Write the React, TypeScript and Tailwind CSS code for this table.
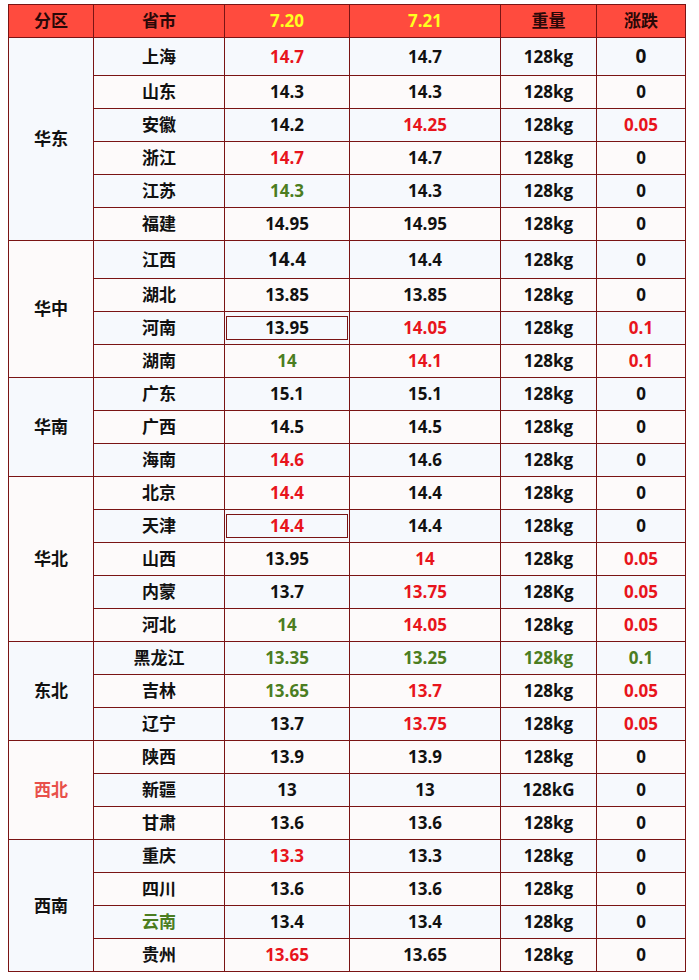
import React from 'react'

type Tone = 'black' | 'red' | 'green'

type Cell = { v: string; t?: Tone; box?: boolean; big?: boolean }

type Row = {
  name: string
  nameTone?: Tone
  d1: Cell
  d2: Cell
  w: Cell
  chg: Cell
  tall?: boolean
}

type Zone = { zone: string; zoneTone?: Tone; rows: Row[] }

const c = (v: string, t: Tone = 'black', extra: Partial<Cell> = {}): Cell => ({ v, t, ...extra })
const kg = c('128kg')

const data: Zone[] = [
  {
    zone: '华东',
    rows: [
      { name: '上海', d1: c('14.7', 'red'), d2: c('14.7'), w: kg, chg: c('0', 'black', { big: true }), tall: true },
      { name: '山东', d1: c('14.3'), d2: c('14.3'), w: kg, chg: c('0') },
      { name: '安徽', d1: c('14.2'), d2: c('14.25', 'red'), w: kg, chg: c('0.05', 'red') },
      { name: '浙江', d1: c('14.7', 'red'), d2: c('14.7'), w: kg, chg: c('0') },
      { name: '江苏', d1: c('14.3', 'green'), d2: c('14.3'), w: kg, chg: c('0') },
      { name: '福建', d1: c('14.95'), d2: c('14.95'), w: kg, chg: c('0') },
    ],
  },
  {
    zone: '华中',
    rows: [
      { name: '江西', d1: c('14.4', 'black', { big: true }), d2: c('14.4'), w: kg, chg: c('0'), tall: true },
      { name: '湖北', d1: c('13.85'), d2: c('13.85'), w: kg, chg: c('0') },
      { name: '河南', d1: c('13.95', 'black', { box: true }), d2: c('14.05', 'red'), w: kg, chg: c('0.1', 'red') },
      { name: '湖南', d1: c('14', 'green'), d2: c('14.1', 'red'), w: kg, chg: c('0.1', 'red') },
    ],
  },
  {
    zone: '华南',
    rows: [
      { name: '广东', d1: c('15.1'), d2: c('15.1'), w: kg, chg: c('0') },
      { name: '广西', d1: c('14.5'), d2: c('14.5'), w: kg, chg: c('0') },
      { name: '海南', d1: c('14.6', 'red'), d2: c('14.6'), w: kg, chg: c('0') },
    ],
  },
  {
    zone: '华北',
    rows: [
      { name: '北京', d1: c('14.4', 'red'), d2: c('14.4'), w: kg, chg: c('0') },
      { name: '天津', d1: c('14.4', 'red', { box: true }), d2: c('14.4'), w: kg, chg: c('0') },
      { name: '山西', d1: c('13.95'), d2: c('14', 'red'), w: kg, chg: c('0.05', 'red') },
      { name: '内蒙', d1: c('13.7'), d2: c('13.75', 'red'), w: c('128Kg'), chg: c('0.05', 'red') },
      { name: '河北', d1: c('14', 'green'), d2: c('14.05', 'red'), w: kg, chg: c('0.05', 'red') },
    ],
  },
  {
    zone: '东北',
    rows: [
      { name: '黑龙江', d1: c('13.35', 'green'), d2: c('13.25', 'green'), w: c('128kg', 'green'), chg: c('0.1', 'green') },
      { name: '吉林', d1: c('13.65', 'green'), d2: c('13.7', 'red'), w: kg, chg: c('0.05', 'red') },
      { name: '辽宁', d1: c('13.7'), d2: c('13.75', 'red'), w: kg, chg: c('0.05', 'red') },
    ],
  },
  {
    zone: '西北',
    zoneTone: 'red',
    rows: [
      { name: '陕西', d1: c('13.9'), d2: c('13.9'), w: kg, chg: c('0') },
      { name: '新疆', d1: c('13'), d2: c('13'), w: c('128kG'), chg: c('0') },
      { name: '甘肃', d1: c('13.6'), d2: c('13.6'), w: kg, chg: c('0') },
    ],
  },
  {
    zone: '西南',
    rows: [
      { name: '重庆', d1: c('13.3', 'red'), d2: c('13.3'), w: kg, chg: c('0') },
      { name: '四川', d1: c('13.6'), d2: c('13.6'), w: kg, chg: c('0') },
      { name: '云南', nameTone: 'green', d1: c('13.4'), d2: c('13.4'), w: kg, chg: c('0') },
      { name: '贵州', d1: c('13.65', 'red'), d2: c('13.65'), w: kg, chg: c('0') },
    ],
  },
]

const toneClass: Record<Tone, string> = {
  black: 'text-[#111111]',
  red: 'text-[#e8141c]',
  green: 'text-[#4b7d21]',
}

const td = 'border border-[#7a1414] text-center align-middle p-0'

function NumCell({ cell }: { cell: Cell }) {
  const cls = `${toneClass[cell.t ?? 'black']} ${cell.big ? 'text-[19px]' : 'text-[17px]'} font-bold`
  if (cell.box) {
    return (
      <td className={td}>
        <div className="mx-[1px] border border-[#7a1414] leading-[21px]">
          <span className={cls}>{cell.v}</span>
        </div>
      </td>
    )
  }
  return (
    <td className={td}>
      <span className={cls}>{cell.v}</span>
    </td>
  )
}

export default function App() {
  let idx = 0
  return (
    <div
      className="min-h-screen bg-white pt-[4px] pl-[8px]"
      style={{ fontFamily: '"Open Sans", "Noto Sans CJK SC", sans-serif' }}
    >
      <table className="table-fixed border-collapse w-[677px]">
        <colgroup>
          <col className="w-[85px]" />
          <col className="w-[131px]" />
          <col className="w-[125px]" />
          <col className="w-[151px]" />
          <col className="w-[96px]" />
          <col className="w-[89px]" />
        </colgroup>
        <thead>
          <tr className="h-[33px] bg-[#ff4b3e]">
            <th className={`${td} text-[17px] font-bold text-[#2a0808]`}>分区</th>
            <th className={`${td} text-[17px] font-bold text-[#2a0808]`}>省市</th>
            <th className={`${td} text-[17px] font-bold text-[#ffff1e]`}>7.20</th>
            <th className={`${td} text-[17px] font-bold text-[#ffff1e]`}>7.21</th>
            <th className={`${td} text-[17px] font-bold text-[#2a0808]`}>重量</th>
            <th className={`${td} text-[17px] font-bold text-[#2a0808]`}>涨跌</th>
          </tr>
        </thead>
        <tbody>
          {data.map((z, zi) =>
            z.rows.map((r, ri) => {
              const rowBg = idx % 2 === 0 ? 'bg-[#f6f9fd]' : 'bg-[#fdfafa]'
              idx++
              return (
                <tr key={r.name} className={`${rowBg} ${r.tall ? 'h-[38px]' : 'h-[33px]'}`}>
                  {ri === 0 && (
                    <td
                      rowSpan={z.rows.length}
                      className={`${td} ${zi % 2 === 0 ? 'bg-[#f6f9fd]' : 'bg-[#fdfafa]'} text-[17px] font-bold ${
                        z.zoneTone === 'red' ? 'text-[#e8504a]' : 'text-[#111111]'
                      }`}
                    >
                      {z.zone}
                    </td>
                  )}
                  <td className={`${td} text-[17px] font-bold ${toneClass[r.nameTone ?? 'black']}`}>{r.name}</td>
                  <NumCell cell={r.d1} />
                  <NumCell cell={r.d2} />
                  <NumCell cell={r.w} />
                  <NumCell cell={r.chg} />
                </tr>
              )
            })
          )}
        </tbody>
      </table>
    </div>
  )
}
